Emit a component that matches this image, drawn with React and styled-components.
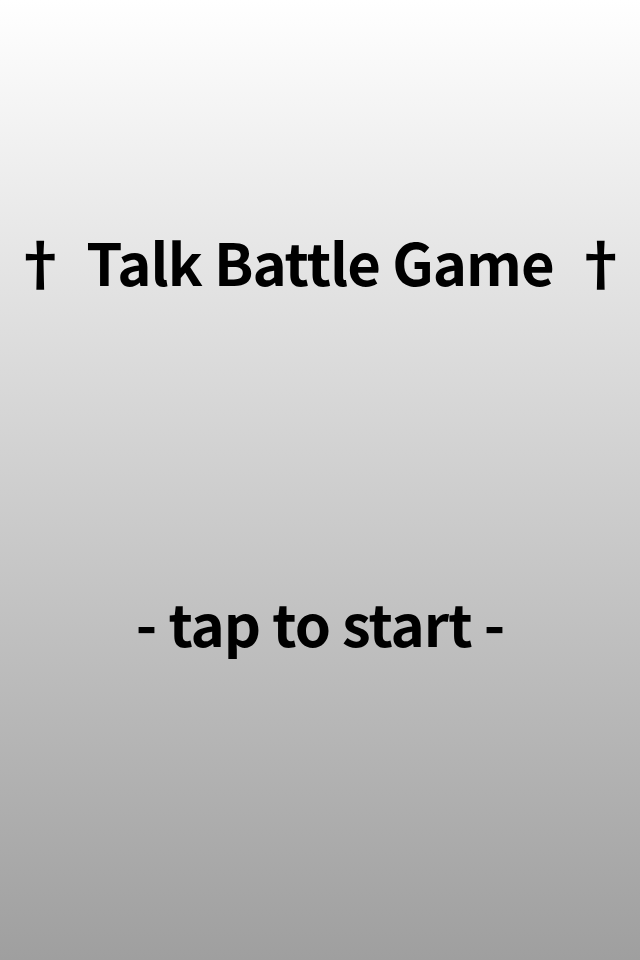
import React from "react";
import styled, { createGlobalStyle } from "styled-components";

const GlobalStyle = createGlobalStyle`
  html, body {
    margin: 0;
    padding: 0;
  }
  body {
    font-family: "Noto Sans CJK JP", "Noto Sans", sans-serif;
  }
`;

const Screen = styled.div`
  width: 640px;
  height: 960px;
  background: linear-gradient(to bottom, #ffffff 0%, #9f9f9f 100%);
  display: flex;
  flex-direction: column;
  align-items: center;
  cursor: pointer;
  user-select: none;
`;

const Title = styled.h1`
  margin: 0;
  padding-top: 219px;
  font-size: 58px;
  font-weight: 700;
  line-height: 84px;
  color: #000;
  letter-spacing: -1px;
  white-space: nowrap;
  display: flex;
  gap: 18px;
`;

const Dagger = styled.span`
  font-weight: 700;
`;

const Prompt = styled.div`
  margin-top: 277px;
  font-size: 58px;
  font-weight: 700;
  line-height: 84px;
  color: #000;
  letter-spacing: -1px;
  white-space: nowrap;
`;

const App = () => {
  return (
    <>
      <GlobalStyle />
      <Screen>
        <Title>
          <Dagger>†</Dagger>
          <span>Talk Battle Game</span>
          <Dagger>†</Dagger>
        </Title>
        <Prompt>- tap to start -</Prompt>
      </Screen>
    </>
  );
};

export default App;
